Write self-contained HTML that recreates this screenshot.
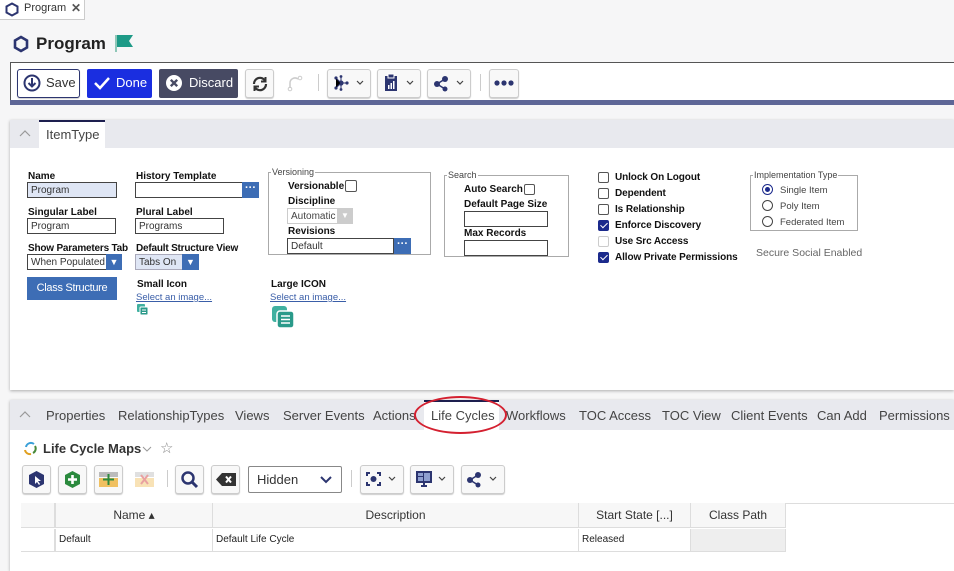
<!DOCTYPE html>
<html><head><meta charset="utf-8"><style>
*{box-sizing:border-box;margin:0;padding:0}
body{width:954px;height:571px;overflow:hidden;background:#f6f6f7;font-family:"Liberation Sans",sans-serif;position:relative;color:#222}
.a{position:absolute}
.lbl{position:absolute;font-size:10px;font-weight:bold;color:#111}
.inp{position:absolute;border:1px solid #444;background:#fff;font-size:10px;padding:2px 3px;height:16px;color:#333;font-family:"Liberation Sans",sans-serif}
.dots{position:absolute;background:#3d6db5;color:#fff;font-size:11px;text-align:center;line-height:12px;font-weight:bold}
.btn{position:absolute;border:1px solid #ccc;border-radius:3px;background:#f8f8f8;box-shadow:0 1px 1px rgba(0,0,0,.2)}
.cb{position:absolute;width:11px;height:11px;border:1px solid #555;border-radius:2px;background:#fff}
.cbc{background:#1b2a8c;border-color:#1b2a8c}
.cbc:after{content:"";position:absolute;left:3px;top:0px;width:3px;height:6px;border:solid #fff;border-width:0 1.5px 1.5px 0;transform:rotate(45deg)}
.t{position:absolute;font-size:10px;font-weight:bold;color:#111;letter-spacing:-0.1px}
.tab{position:absolute;top:408px;font-size:13px;color:#444}
.link{position:absolute;font-size:10px;color:#3a5ea8;text-decoration:underline}
.fs{position:absolute;border:1px solid #aaa}
.lg{position:absolute;font-size:9px;color:#444;background:#fff;padding:0 1px;top:-6px;left:2px;line-height:11px}
.rad{position:absolute;width:11px;height:11px;border:1px solid #444;border-radius:50%;background:#fff}
.th{position:absolute;top:503px;height:24px;font-size:12px;color:#333;text-align:center;line-height:24px;border-right:1px solid #ddd}
.td{position:absolute;top:529px;height:22px;font-size:10px;color:#222;line-height:22px;padding-left:3px;border-right:1px solid #ddd}
</style></head><body>
<!-- top tab -->
<div class="a" style="left:0;top:0;width:85px;height:20px;background:#fff;border-right:1px solid #ccc;border-bottom:1px solid #ccc"></div>
<svg class="a" style="left:5px;top:2px" width="14" height="15" viewBox="0 0 14 15"><path d="M7 1.5L12.5 4.5V10.5L7 13.5L1.5 10.5V4.5Z" fill="none" stroke="#2c3570" stroke-width="2"/></svg>
<div class="a" style="left:24px;top:2px;font-size:11px;color:#333">Program</div>
<div class="a" style="left:71px;top:1px;font-size:12px;color:#555;font-weight:bold">✕</div>
<!-- title -->
<svg class="a" style="left:13px;top:35px" width="16" height="18" viewBox="0 0 16 18"><path d="M8 2L14 5.5V12.5L8 16L2 12.5V5.5Z" fill="none" stroke="#2c3570" stroke-width="2.6"/></svg>
<div class="a" style="left:36px;top:34px;font-size:17px;font-weight:bold;color:#222">Program</div>
<div class="a" style="left:115px;top:35px;width:2px;height:17px;background:#8fc7b8"></div>
<svg class="a" style="left:117px;top:35px" width="16" height="12"><path d="M0 0H16L12 6L16 12H0Z" fill="#1e9a87"/></svg>
<!-- toolbar -->
<div class="a" style="left:10px;top:62px;width:944px;height:42px;border:1px solid #555;border-right:none;background:#fff"></div>
<div class="a" style="left:10px;top:100px;width:944px;height:5px;background:#5e6696"></div>
<div class="btn" style="left:17px;top:69px;width:63px;height:29px;border:1px solid #2c3570;background:#fff"></div>
<svg class="a" style="left:23px;top:74px" width="18" height="18"><circle cx="9" cy="9" r="7.5" fill="none" stroke="#2c3570" stroke-width="2"/><path d="M9 4V12M5.5 9L9 12.5L12.5 9" fill="none" stroke="#2c3570" stroke-width="2"/></svg>
<div class="a" style="left:46px;top:75px;font-size:13px;color:#333">Save</div>
<div class="a" style="left:87px;top:69px;width:65px;height:29px;background:#1a2ee0;border-radius:2px"></div>
<svg class="a" style="left:93px;top:75px" width="18" height="16"><path d="M2 8L7 13L16 3" fill="none" stroke="#fff" stroke-width="2.5"/></svg>
<div class="a" style="left:116px;top:75px;font-size:13px;color:#fff">Done</div>
<div class="a" style="left:159px;top:69px;width:79px;height:29px;background:#474a63;border-radius:2px"></div>
<svg class="a" style="left:165px;top:74px" width="18" height="18"><circle cx="9" cy="9" r="8" fill="#fff"/><path d="M5.8 5.8L12.2 12.2M12.2 5.8L5.8 12.2" stroke="#474a63" stroke-width="2.4"/></svg>
<div class="a" style="left:189px;top:75px;font-size:13px;color:#fff">Discard</div>
<div class="btn" style="left:245px;top:69px;width:29px;height:29px"></div>
<svg class="a" style="left:251px;top:75px" width="18" height="18"><path d="M3 9A6 6 0 0 1 14 5.5M15 9A6 6 0 0 1 4 12.5" fill="none" stroke="#333" stroke-width="2.2"/><path d="M14.5 2V6.5H10M3.5 16V11.5H8" fill="none" stroke="#333" stroke-width="2"/></svg>
<svg class="a" style="left:286px;top:74px" width="18" height="18"><path d="M4 14V9A5 5 0 0 1 12 5" fill="none" stroke="#ccc" stroke-width="1.5"/><circle cx="14" cy="4" r="1.8" fill="none" stroke="#ccc"/><circle cx="4" cy="15" r="1.8" fill="none" stroke="#ccc"/></svg>
<div class="a" style="left:318px;top:74px;width:1px;height:17px;background:#ccc"></div>
<div class="btn" style="left:327px;top:69px;width:44px;height:29px"></div>
<svg class="a" style="left:333px;top:74px" width="34" height="18"><g fill="#2c3570"><circle cx="8" cy="9" r="2.6"/><circle cx="3" cy="4" r="1.6"/><circle cx="3" cy="14" r="1.6"/><circle cx="14" cy="9" r="1.6"/><circle cx="8" cy="2.5" r="1.4"/><circle cx="8" cy="15.5" r="1.4"/></g><path d="M3 4L8 9L3 14M8 9H14M8 3V15" stroke="#2c3570"/><path d="M24 7L27 10L30 7" fill="none" stroke="#444" stroke-width="1.2"/></svg>
<div class="btn" style="left:377px;top:69px;width:44px;height:29px"></div>
<svg class="a" style="left:383px;top:73px" width="34" height="20"><rect x="2" y="3" width="12" height="15" fill="#2c3570"/><rect x="5" y="1" width="6" height="4" fill="#2c3570" stroke="#fff"/><rect x="5" y="12" width="1.5" height="4" fill="#fff"/><rect x="7.5" y="10" width="1.5" height="6" fill="#fff"/><rect x="10" y="8" width="1.5" height="8" fill="#fff"/><path d="M24 8L27 11L30 8" fill="none" stroke="#444" stroke-width="1.2"/></svg>
<div class="btn" style="left:427px;top:69px;width:44px;height:29px"></div>
<svg class="a" style="left:433px;top:74px" width="34" height="18"><g fill="#2c3570"><circle cx="4" cy="10" r="3"/><circle cx="12" cy="5" r="3"/><circle cx="12" cy="15" r="2.5"/></g><path d="M4 10L12 5M4 10L12 15" stroke="#2c3570" stroke-width="1.5"/><path d="M24 7L27 10L30 7" fill="none" stroke="#444" stroke-width="1.2"/></svg>
<div class="a" style="left:480px;top:74px;width:1px;height:17px;background:#ccc"></div>
<div class="btn" style="left:489px;top:69px;width:30px;height:29px"></div>
<svg class="a" style="left:493px;top:79px" width="22" height="8"><g fill="#2c3570"><circle cx="4" cy="4" r="2.6"/><circle cx="11" cy="4" r="2.6"/><circle cx="18" cy="4" r="2.6"/></g></svg>
<!-- panel 1 -->
<div class="a" style="left:10px;top:120px;width:944px;height:270px;background:#fff;box-shadow:0 1px 3px rgba(0,0,0,.3)"></div>
<div class="a" style="left:10px;top:120px;width:944px;height:28px;background:#e8e9ee"></div>
<svg class="a" style="left:19px;top:130px" width="12" height="8"><path d="M1 6L6 1L11 6" fill="none" stroke="#999" stroke-width="1.2"/></svg>
<div class="a" style="left:39px;top:120px;width:66px;height:28px;background:#fff;border-top:2px solid #1d1f4f"></div>
<div class="a" style="left:46px;top:127px;font-size:13px;color:#444">ItemType</div>
<div class="lbl" style="left:28px;top:171px">Name</div>
<div class="inp" style="left:27px;top:182px;width:90px;background:#dfe6f5">Program</div>
<div class="lbl" style="left:28px;top:207px">Singular Label</div>
<div class="inp" style="left:27px;top:218px;width:89px">Program</div>
<div class="lbl" style="left:28px;top:243px;letter-spacing:-0.2px">Show Parameters Tab</div>
<div class="inp" style="left:27px;top:254px;width:95px">When Populated</div>
<div class="dots" style="left:106px;top:254px;width:16px;height:16px;line-height:16px;font-size:9px">▼</div>
<div class="a" style="left:27px;top:277px;width:90px;height:23px;background:#3d6db5;color:#fff;font-size:11px;text-align:center;line-height:23px;letter-spacing:-0.3px">Class Structure</div>
<div class="lbl" style="left:136px;top:171px">History Template</div>
<div class="inp" style="left:135px;top:182px;width:108px"></div>
<div class="dots" style="left:242px;top:182px;width:17px;height:16px;line-height:12px">···</div>
<div class="lbl" style="left:136px;top:207px">Plural Label</div>
<div class="inp" style="left:135px;top:218px;width:89px">Programs</div>
<div class="lbl" style="left:136px;top:243px;letter-spacing:-0.2px">Default Structure View</div>
<div class="inp" style="left:135px;top:254px;width:64px;background:#dfe6f5;border-color:#aab">Tabs On</div>
<div class="dots" style="left:182px;top:254px;width:17px;height:16px;line-height:16px;font-size:9px">▼</div>
<div class="lbl" style="left:137px;top:279px">Small Icon</div>
<div class="link" style="left:136px;top:292px;font-size:9.5px">Select an image...</div>
<svg class="a" style="left:137px;top:304px" width="12" height="12"><rect x="0" y="0" width="8" height="8" rx="1" fill="#40b0a0"/><rect x="3" y="3" width="8" height="8" rx="1" fill="#2a9a8a" stroke="#fff"/><path d="M5 6H9M5 8.5H9" stroke="#fff"/></svg>
<div class="fs" style="left:268px;top:172px;width:163px;height:83px"><span class="lg">Versioning</span></div>
<div class="lbl" style="left:288px;top:181px">Versionable</div>
<div class="cb" style="left:345px;top:180px;width:12px;height:12px"></div>
<div class="lbl" style="left:288px;top:196px">Discipline</div>
<div class="inp" style="left:287px;top:208px;width:66px;border-color:#ccc;color:#444">Automatic</div>
<div class="a" style="left:337px;top:208px;width:16px;height:16px;background:#ccc;color:#fff;font-size:8px;text-align:center;line-height:16px">▼</div>
<div class="lbl" style="left:288px;top:226px">Revisions</div>
<div class="inp" style="left:287px;top:238px;width:107px">Default</div>
<div class="dots" style="left:394px;top:238px;width:17px;height:16px;line-height:12px">···</div>
<div class="lbl" style="left:271px;top:279px">Large ICON</div>
<div class="link" style="left:270px;top:292px;font-size:9.5px">Select an image...</div>
<svg class="a" style="left:272px;top:306px" width="25" height="23"><rect x="0" y="0" width="15" height="16" rx="3" fill="#40b0a0"/><rect x="5" y="5" width="17" height="17" rx="3" fill="#2a9a8a" stroke="#fff" stroke-width="1.5"/><path d="M9 10H18M9 13.5H18M9 17H18" stroke="#fff" stroke-width="1.5"/></svg>
<div class="fs" style="left:444px;top:175px;width:125px;height:82px"><span class="lg">Search</span></div>
<div class="lbl" style="left:464px;top:184px">Auto Search</div>
<div class="cb" style="left:524px;top:184px;width:11px;height:11px"></div>
<div class="lbl" style="left:464px;top:199px">Default Page Size</div>
<div class="inp" style="left:464px;top:211px;width:84px"></div>
<div class="lbl" style="left:464px;top:228px">Max Records</div>
<div class="inp" style="left:464px;top:240px;width:84px"></div>
<div class="cb" style="left:598px;top:172px"></div><div class="t" style="left:615px;top:172px">Unlock On Logout</div>
<div class="cb" style="left:598px;top:188px"></div><div class="t" style="left:615px;top:188px">Dependent</div>
<div class="cb" style="left:598px;top:204px"></div><div class="t" style="left:615px;top:204px">Is Relationship</div>
<div class="cb cbc" style="left:598px;top:220px"></div><div class="t" style="left:615px;top:220px">Enforce Discovery</div>
<div class="cb" style="left:598px;top:236px;border-color:#ccc"></div><div class="t" style="left:615px;top:236px">Use Src Access</div>
<div class="cb cbc" style="left:598px;top:252px"></div><div class="t" style="left:615px;top:252px">Allow Private Permissions</div>
<div class="fs" style="left:750px;top:175px;width:108px;height:56px"><span class="lg">Implementation Type</span></div>
<div class="rad" style="left:762px;top:184px;border-color:#1b2a8c"></div><div class="a" style="left:765px;top:187px;width:5px;height:5px;border-radius:50%;background:#1b2a8c"></div>
<div class="a" style="left:780px;top:185px;font-size:9.5px;color:#444">Single Item</div>
<div class="rad" style="left:762px;top:200px"></div><div class="a" style="left:780px;top:201px;font-size:9.5px;color:#444">Poly Item</div>
<div class="rad" style="left:762px;top:216px"></div><div class="a" style="left:780px;top:217px;font-size:9.5px;color:#444">Federated Item</div>
<div class="a" style="left:756px;top:247px;font-size:10.5px;color:#666">Secure Social Enabled</div>
<!-- panel 2 -->
<div class="a" style="left:10px;top:400px;width:944px;height:171px;background:#fff;box-shadow:0 1px 3px rgba(0,0,0,.3)"></div>
<div class="a" style="left:10px;top:400px;width:944px;height:30px;background:#e8e9ee"></div>
<svg class="a" style="left:19px;top:411px" width="12" height="8"><path d="M1 6L6 1L11 6" fill="none" stroke="#999" stroke-width="1.2"/></svg>
<div class="a" style="left:424px;top:400px;width:75px;height:30px;background:#fff;border-top:2px solid #1d1f4f"></div>
<div class="tab" style="left:46px">Properties</div>
<div class="tab" style="left:118px">RelationshipTypes</div>
<div class="tab" style="left:235px">Views</div>
<div class="tab" style="left:283px">Server Events</div>
<div class="tab" style="left:373px">Actions</div>
<div class="tab" style="left:431px">Life Cycles</div>
<div class="tab" style="left:506px">Workflows</div>
<div class="tab" style="left:579px">TOC Access</div>
<div class="tab" style="left:662px">TOC View</div>
<div class="tab" style="left:731px">Client Events</div>
<div class="tab" style="left:817px">Can Add</div>
<div class="tab" style="left:879px">Permissions</div>
<div class="a" style="left:414px;top:396px;width:93px;height:38px;border:2.5px solid #d42030;border-radius:50%"></div>
<svg class="a" style="left:23px;top:441px" width="15" height="15"><path d="M3 6A5 5 0 0 1 11 3" fill="none" stroke="#3aa0d8" stroke-width="2"/><path d="M12 5A5 5 0 0 1 10 12" fill="none" stroke="#4a8a3a" stroke-width="2"/><path d="M8 13A5 5 0 0 1 2 9" fill="none" stroke="#e0a020" stroke-width="2"/></svg>
<div class="a" style="left:43px;top:441px;font-size:13px;font-weight:bold;color:#333">Life Cycle Maps</div>
<svg class="a" style="left:142px;top:446px" width="10" height="6"><path d="M1 1L5 5L9 1" fill="none" stroke="#999"/></svg>
<div class="a" style="left:160px;top:439px;font-size:15px;color:#888">☆</div>
<div class="btn" style="left:22px;top:465px;width:29px;height:29px"></div>
<svg class="a" style="left:27px;top:470px" width="19" height="19"><path d="M9.5 1L17 5V14L9.5 18L2 14V5Z" fill="#2c3570"/><path d="M8 6V14L10 12L12 15L13 14L11 11H14Z" fill="#fff"/></svg>
<div class="btn" style="left:58px;top:465px;width:29px;height:29px"></div>
<svg class="a" style="left:63px;top:470px" width="19" height="19"><path d="M9.5 1L17 5V14L9.5 18L2 14V5Z" fill="#2b8a3e"/><path d="M9.5 5V14M5 9.5H14" stroke="#fff" stroke-width="2.6"/></svg>
<div class="btn" style="left:94px;top:465px;width:29px;height:29px"></div>
<svg class="a" style="left:99px;top:472px" width="19" height="15"><rect x="0" y="0" width="19" height="5" fill="#bbb"/><rect x="0" y="6" width="19" height="9" fill="#f0c060"/><path d="M9.5 2V13M4 7.5H15" stroke="#2b8a3e" stroke-width="2"/></svg>
<svg class="a" style="left:135px;top:472px" width="19" height="15" opacity=".45"><rect x="0" y="0" width="19" height="5" fill="#bbb"/><rect x="0" y="6" width="19" height="9" fill="#f0c060"/><path d="M6 3L13 12M13 3L6 12" stroke="#d03030" stroke-width="2"/></svg>
<div class="a" style="left:167px;top:470px;width:1px;height:17px;background:#ccc"></div>
<div class="btn" style="left:175px;top:465px;width:29px;height:29px"></div>
<svg class="a" style="left:180px;top:470px" width="19" height="19"><circle cx="8" cy="8" r="5.5" fill="none" stroke="#2c3570" stroke-width="2.5"/><path d="M12 12L17 17" stroke="#2c3570" stroke-width="3"/></svg>
<div class="btn" style="left:211px;top:465px;width:29px;height:29px"></div>
<svg class="a" style="left:216px;top:473px" width="20" height="13"><path d="M0 6.5L6 0H20V13H6Z" fill="#333"/><path d="M10 3.5L15 9.5M15 3.5L10 9.5" stroke="#fff" stroke-width="2"/></svg>
<div class="a" style="left:248px;top:466px;width:94px;height:27px;border:1px solid #888;border-radius:2px;background:#fff"></div>
<div class="a" style="left:257px;top:472px;font-size:13px;color:#333">Hidden</div>
<svg class="a" style="left:320px;top:476px" width="12" height="8"><path d="M1 1L6 6L11 1" fill="none" stroke="#2c3570" stroke-width="2"/></svg>
<div class="a" style="left:351px;top:470px;width:1px;height:17px;background:#ccc"></div>
<div class="btn" style="left:360px;top:465px;width:44px;height:29px"></div>
<svg class="a" style="left:366px;top:471px" width="34" height="17"><path d="M1 5V2H4M11 2H14V5M14 11V14H11M4 14H1V11" fill="none" stroke="#2c3570" stroke-width="2"/><circle cx="7.5" cy="8" r="3" fill="#2c3570"/><path d="M23 6L26 9L29 6" fill="none" stroke="#444" stroke-width="1.2"/></svg>
<div class="btn" style="left:410px;top:465px;width:44px;height:29px"></div>
<svg class="a" style="left:415px;top:470px" width="34" height="18"><rect x="1" y="1" width="16" height="12" fill="#2c3570"/><rect x="3" y="3" width="5" height="3" fill="#8fa0d0"/><rect x="9" y="3" width="6" height="8" fill="#8fa0d0"/><rect x="3" y="7" width="5" height="4" fill="#8fa0d0"/><path d="M6 16H12M9 13V16" stroke="#2c3570" stroke-width="2"/><path d="M24 7L27 10L30 7" fill="none" stroke="#444" stroke-width="1.2"/></svg>
<div class="btn" style="left:461px;top:465px;width:44px;height:29px"></div>
<svg class="a" style="left:466px;top:470px" width="34" height="18"><g fill="#2c3570"><circle cx="4" cy="10" r="3"/><circle cx="12" cy="5" r="3"/><circle cx="12" cy="15" r="2.5"/></g><path d="M4 10L12 5M4 10L12 15" stroke="#2c3570" stroke-width="1.5"/><path d="M24 7L27 10L30 7" fill="none" stroke="#444" stroke-width="1.2"/></svg>
<!-- table -->
<div class="a" style="left:21px;top:503px;width:933px;height:1px;background:#ddd"></div>
<div class="a" style="left:21px;top:503px;width:765px;height:24px;background:#f7f7f7"></div>
<div class="th" style="left:21px;width:34px"></div>
<div class="th" style="left:55px;width:158px;border-left:1px solid #ddd">Name ▴</div>
<div class="th" style="left:213px;width:366px">Description</div>
<div class="th" style="left:579px;width:112px">Start State [...]</div>
<div class="th" style="left:691px;width:95px">Class Path</div>
<div class="a" style="left:21px;top:527px;width:765px;height:1px;background:#ddd"></div>
<div class="td" style="left:21px;width:34px"></div>
<div class="td" style="left:55px;width:158px;border-left:1px solid #ddd">Default</div>
<div class="td" style="left:213px;width:366px">Default Life Cycle</div>
<div class="td" style="left:579px;width:112px">Released</div>
<div class="td" style="left:691px;width:95px;background:#eee"></div>
<div class="a" style="left:21px;top:551px;width:765px;height:1px;background:#ddd"></div>
</body></html>
